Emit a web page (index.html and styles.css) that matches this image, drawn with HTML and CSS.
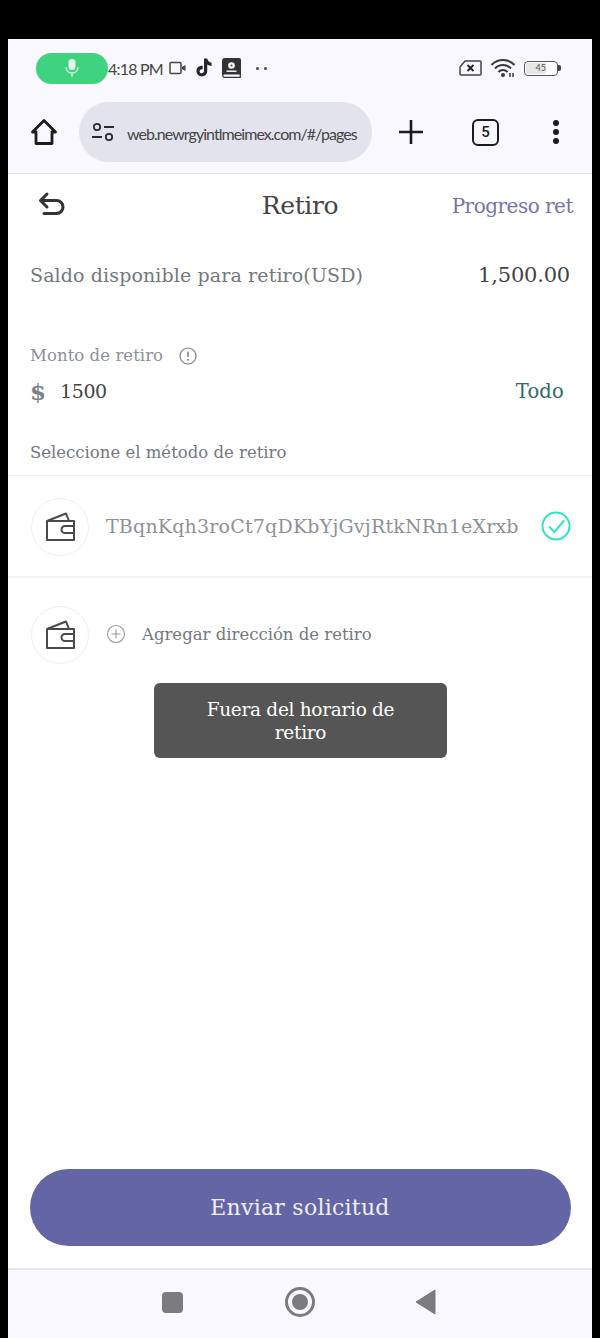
FILE: index.html
```html
<!DOCTYPE html>
<html lang="es">
<head>
<meta charset="utf-8">
<title>Retiro</title>
<link rel="stylesheet" href="styles.css">
</head>
<body>
<div class="screen">
  <div class="status">
    <div class="status-left">
      <span class="mic">
        <svg width="16" height="20" viewBox="0 0 16 20"><rect x="4.500" y="1" width="7" height="11" rx="3.500" fill="#fff" opacity=".85"/><path d="M2 9c0 4 3 6 6 6s6-2 6-6M8 15v4" fill="none" stroke="#fff" stroke-width="1.400" opacity=".75"/></svg>
      </span>
      <span class="time">4:18 PM</span>
      <svg class="st-cam" width="17" height="14" viewBox="0 0 17 14"><rect x="1" y="1.500" width="11" height="11" rx="1" fill="none" stroke="#444" stroke-width="1.500"/><path d="M13 6l3.500-2v6L13 8z" fill="#444"/></svg>
      <svg class="st-tt" width="18" height="20" viewBox="2 1.500 14 18.500"><path d="M9 2h3c.3 2.200 1.700 3.500 4 3.800v3c-1.500 0-2.900-.4-4-1.200v6c0 3-2.300 5-5 5s-5-2.200-5-5c0-3 2.500-5.200 5.800-4.800v3.100c-1.600-.4-2.900.5-2.900 1.800 0 1.100.9 2 2 2s2.100-.9 2.100-2.100z" fill="#262626"/></svg>
      <svg class="st-book" width="20" height="20" viewBox="0 0 20 20"><path d="M1 3a3 3 0 0 1 3-3h14a2 2 0 0 1 2 2v14H4a3 3 0 0 0-3 1.500z" fill="#333"/><path d="M1.700 17.500a1.800 1.800 0 0 1 2-1.500H19.300v3.300H3.700a1.800 1.800 0 0 1-2-1.800z" fill="none" stroke="#333" stroke-width="1.200"/><circle cx="10.500" cy="7.500" r="3.300" fill="#fff"/><circle cx="10.500" cy="7.500" r="1" fill="#333"/><rect x="5.500" y="12.500" width="10" height="1.400" fill="#fff"/></svg>
      <span class="dots">
        <i class="dot"></i><i class="dot"></i>
      </span>
    </div>
    <div class="status-right">
      <svg width="23" height="18" viewBox="0 0 23 18"><path d="M6 2h15a1 1 0 0 1 1 1v12a1 1 0 0 1-1 1H2a1 1 0 0 1-1-1V8z" fill="none" stroke="#444" stroke-width="1.500"/><path d="M8.500 6l6 6M14.500 6l-6 6" stroke="#222" stroke-width="1.800"/></svg>
      <svg width="26" height="20" viewBox="0 0 26 20"><path d="M1.500 7a16 16 0 0 1 23 0M5 10.500a11 11 0 0 1 16 0M8.500 14a6 6 0 0 1 9 0" fill="none" stroke="#3a3a3a" stroke-width="2"/><circle cx="13" cy="17" r="2" fill="#3a3a3a"/><path d="M20 15v4M23 15v4" stroke="#3a3a3a" stroke-width="1.500"/></svg>
      <div class="battery-wrap">
        <div class="battery"><span class="batt-num">45</span></div>
        <span class="batt-cap"></span>
      </div>
    </div>
  </div>

  <div class="toolbar">
    <svg class="t-home" width="28" height="28" viewBox="0 0 28 28"><path d="M14 2.500L2.500 14H6v11.500h16V14h3.500z" fill="none" stroke="#1c1c1c" stroke-width="2.800" stroke-linejoin="round"/></svg>
    <div class="url">
      <svg width="24" height="20" viewBox="0 0 24 20"><circle cx="6" cy="5" r="3.200" fill="none" stroke="#2b2b2b" stroke-width="1.800"/><path d="M13 5h10M1 15h10" stroke="#2b2b2b" stroke-width="1.800"/><circle cx="18" cy="15" r="3.200" fill="none" stroke="#2b2b2b" stroke-width="1.800"/></svg>
      <span class="url-text">web.newrgyintlmeimex.com/#/pages</span>
    </div>
    <svg class="t-plus" width="26" height="26" viewBox="0 0 26 26"><path d="M13 1v24M1 13h24" stroke="#1c1c1c" stroke-width="2.600"/></svg>
    <div class="tabs">5</div>
    <div class="kebab"><i></i><i></i><i></i></div>
  </div>

  <main class="page">
    <header class="head">
      <svg class="back" width="30" height="30" viewBox="0 0 30 30"><path d="M10 4L3.500 10.500 10 17M4 10.500h15.500a6.500 6.500 0 0 1 0 13H7" fill="none" stroke="#333" stroke-width="3" stroke-linecap="round" stroke-linejoin="round"/></svg>
      <h1 class="title">Retiro</h1>
      <a class="progress">Progreso ret</a>
    </header>

    <div class="balance">
      <span class="bal-label">Saldo disponible para retiro(USD)</span>
      <span class="bal-value">1,500.00</span>
    </div>

    <div class="amount-label">
      <span>Monto de retiro</span>
      <svg width="18" height="18" viewBox="0 0 18 18"><circle cx="9" cy="9" r="8" fill="none" stroke="#7d8187" stroke-width="1.200"/><path d="M9 4.500v5.500" stroke="#7d8187" stroke-width="1.500"/><circle cx="9" cy="12.800" r="1" fill="#7d8187"/></svg>
    </div>
    <div class="amount-row">
      <span class="currency">$</span>
      <span class="amount">1500</span>
      <span class="all">Todo</span>
    </div>

    <div class="method-label">Seleccione el método de retiro</div>

    <div class="row row-address">
      <span class="wallet">
        <svg width="30" height="30" viewBox="0 0 30 30"><path d="M2 9v19h27V9zM2 9L21 1.500 24 9M29 14H20a3.500 3.500 0 0 0 0 7h9" fill="none" stroke="#4a4a4a" stroke-width="2" stroke-linejoin="round"/></svg>
      </span>
      <span class="address">TBqnKqh3roCt7qDKbYjGvjRtkNRn1eXrxb</span>
      <svg class="check" width="30" height="30" viewBox="0 0 30 30"><circle cx="15" cy="15" r="13.500" fill="none" stroke="#2ee6c4" stroke-width="2"/><path d="M8 15.500l5.500 5.500L23 9.500" fill="none" stroke="#2ee6c4" stroke-width="2"/></svg>
    </div>

    <div class="row row-add">
      <span class="wallet">
        <svg width="30" height="30" viewBox="0 0 30 30"><path d="M2 9v19h27V9zM2 9L21 1.500 24 9M29 14H20a3.500 3.500 0 0 0 0 7h9" fill="none" stroke="#4a4a4a" stroke-width="2" stroke-linejoin="round"/></svg>
      </span>
      <svg class="plus-c" width="20" height="20" viewBox="0 0 20 20"><circle cx="10" cy="10" r="8.500" fill="none" stroke="#999" stroke-width="1.100"/><path d="M10 5.500v9M5.500 10h9" stroke="#999" stroke-width="1.100"/></svg>
      <span class="add-text">Agregar dirección de retiro</span>
    </div>

    <div class="spacer"></div>
    <button class="submit">Enviar solicitud</button>

    <div class="toast">Fuera del horario de retiro</div>
  </main>

  <nav class="navbar">
    <span class="nav-square"></span>
    <span class="nav-circle"><i></i></span>
    <svg width="24" height="26" viewBox="0 0 24 26"><path d="M21 1v24L2 13z" fill="#7c7c7e" stroke="#7c7c7e" stroke-linejoin="round"/></svg>
  </nav>
</div>
</body>
</html>
```

FILE: styles.css
```css
* { box-sizing: border-box; }
html, body { margin: 0; padding: 0; background: #000; }
body { height: 1338px; overflow: hidden; padding-top: 39px; }
.screen { margin: 0 8px; width: 584px; height: 1299px; background: #fff; display: flex; flex-direction: column; font-family: "DejaVu Serif", "Liberation Serif", serif; }

.status { height: 62px; background: #f8f8fe; display: flex; justify-content: space-between; align-items: center; padding: 0 31px 4px 28px; flex: none; }
.status-left { display: flex; align-items: center; }
.status-right { display: flex; align-items: center; gap: 8px; }
.mic { width: 72px; height: 31px; border-radius: 16px; background: #3ed47f; display: flex; align-items: center; justify-content: center; }
.time { font-family: "Lato", sans-serif; font-size: 16px; color: #444; letter-spacing: -0.8px; margin-right: 6px; white-space: nowrap; }
.st-cam { margin-right: 9px; }
.st-tt { margin-right: 8px; }
.st-book { margin-right: 15px; }
.dots { display: flex; gap: 5px; }
.dot { width: 3px; height: 3px; border-radius: 50%; background: #444; }
.battery-wrap { display: flex; align-items: center; }
.battery { width: 34px; height: 15px; border: 1.500px solid #555; border-radius: 4px; background: #fff; display: flex; align-items: center; padding: 1px; }
.batt-num { display: block; width: 20px; height: 100%; background: #e6e6e6; border-radius: 2px; font: 9px/10px "Lato", sans-serif; color: #555; text-align: right; white-space: nowrap; }
.batt-cap { width: 3px; height: 6px; background: #444; border-radius: 0 2px 2px 0; }

.toolbar { height: 73px; background: #f8f8fe; border-bottom: 1px solid #dedee6; display: flex; align-items: center; padding: 0 21px 10px 22px; flex: none; }
.t-home { flex: none; }
.url { width: 293px; height: 60px; margin-left: 21px; border-radius: 30px; background: #e2e3ed; display: flex; align-items: center; padding: 0 11px 0 12px; gap: 12px; overflow: hidden; flex: none; }
.url svg { flex: none; }
.url-text { font-family: "Lato", sans-serif; font-size: 16px; letter-spacing: -0.950px; color: #444; white-space: nowrap; padding-top: 3px; }
.t-plus { margin-left: 26px; flex: none; }
.tabs { width: 27px; height: 27px; margin-left: 48px; border: 2.500px solid #1c1c1c; border-radius: 6px; font: 500 15px/22px "Roboto", sans-serif; color: #1c1c1c; text-align: center; flex: none; }
.kebab { margin-left: 54px; display: flex; flex-direction: column; gap: 3px; flex: none; }
.kebab i { width: 6px; height: 6px; border-radius: 50%; background: #1c1c1c; }

.page { position: relative; flex: 1; display: flex; flex-direction: column; min-height: 0; }
.head { display: flex; align-items: center; justify-content: space-between; height: 62px; padding: 1px 19px 0 29px; position: relative; flex: none; }
.back { margin-top: -1px; }
.title { position: absolute; left: 0; right: 0; text-align: center; margin: 0; font-size: 25px; font-weight: 400; color: #444; letter-spacing: -0.400px; pointer-events: none; }
.progress { font-size: 20px; letter-spacing: -0.500px; color: #7475ab; white-space: nowrap; }

.balance { display: flex; justify-content: space-between; align-items: center; padding: 0 22px; margin-top: 10px; height: 58px; flex: none; }
.bal-label { font-size: 19px; letter-spacing: 0.120px; color: #73787d; }
.bal-value { font-size: 21px; letter-spacing: -0.200px; color: #444; }

.amount-label { display: flex; align-items: center; gap: 16px; padding: 0 22px; margin-top: 38px; height: 27px; font-size: 16.500px; letter-spacing: 0.060px; color: #8b9096; flex: none; }
.amount-row { display: flex; align-items: center; padding: 0 28px 0 22px; height: 44px; flex: none; }
.currency { font-size: 23px; color: #7d8187; font-weight: 700; width: 30px; }
.amount { font-size: 19px; letter-spacing: -0.400px; color: #444; flex: 1; }
.all { font-size: 19.500px; letter-spacing: 0.200px; color: #2f6a6c; }

.method-label { padding: 0 22px; margin-top: 24px; height: 39px; line-height: 32px; font-size: 16.500px; color: #73787d; border-bottom: 1px solid #eef0f2; flex: none; }

.row { display: flex; align-items: center; padding: 0 22px; height: 102px; flex: none; }
.row-address { border-bottom: 2px solid #f1f2f5; }
.row-add { height: 112px; }
.wallet { width: 58px; height: 58px; margin: 2px 1px 0; border: 1px solid #f0f0f2; border-radius: 50%; display: flex; align-items: center; justify-content: center; flex: none; }
.address { margin-left: 16px; flex: 1; font-size: 19px; letter-spacing: 0.200px; color: #8e9297; white-space: nowrap; }
.check { flex: none; margin-right: -1px; }
.plus-c { margin-left: 16px; flex: none; }
.add-text { margin-left: 16px; font-size: 16.500px; color: #73787d; }

.spacer { flex: 1; }
.submit { display: block; width: 541px; height: 77px; margin: 0 auto 22px; border: none; border-radius: 39px; background: #6465a4; color: #eeeefa; font-family: inherit; font-size: 22px; letter-spacing: 0.250px; flex: none; }

.toast { position: absolute; left: 146px; top: 509px; width: 293px; height: 75px; padding: 15px 30px; border-radius: 6px; background: #555; color: #fff; font-size: 18.500px; line-height: 23px; letter-spacing: -0.300px; text-align: center; }

.navbar { height: 70px; background: #f8f8fe; border-top: 2px solid #e6e6ea; display: flex; align-items: center; padding: 0 154px 4px 154px; justify-content: space-between; flex: none; }
.nav-square { width: 21px; height: 21px; border-radius: 4px; background: #7c7c7e; }
.nav-circle { width: 30px; height: 30px; margin-left: 2px; border: 3px solid #7c7c7e; border-radius: 50%; display: flex; align-items: center; justify-content: center; }
.nav-circle i { width: 16px; height: 16px; border-radius: 50%; background: #7c7c7e; }
```
